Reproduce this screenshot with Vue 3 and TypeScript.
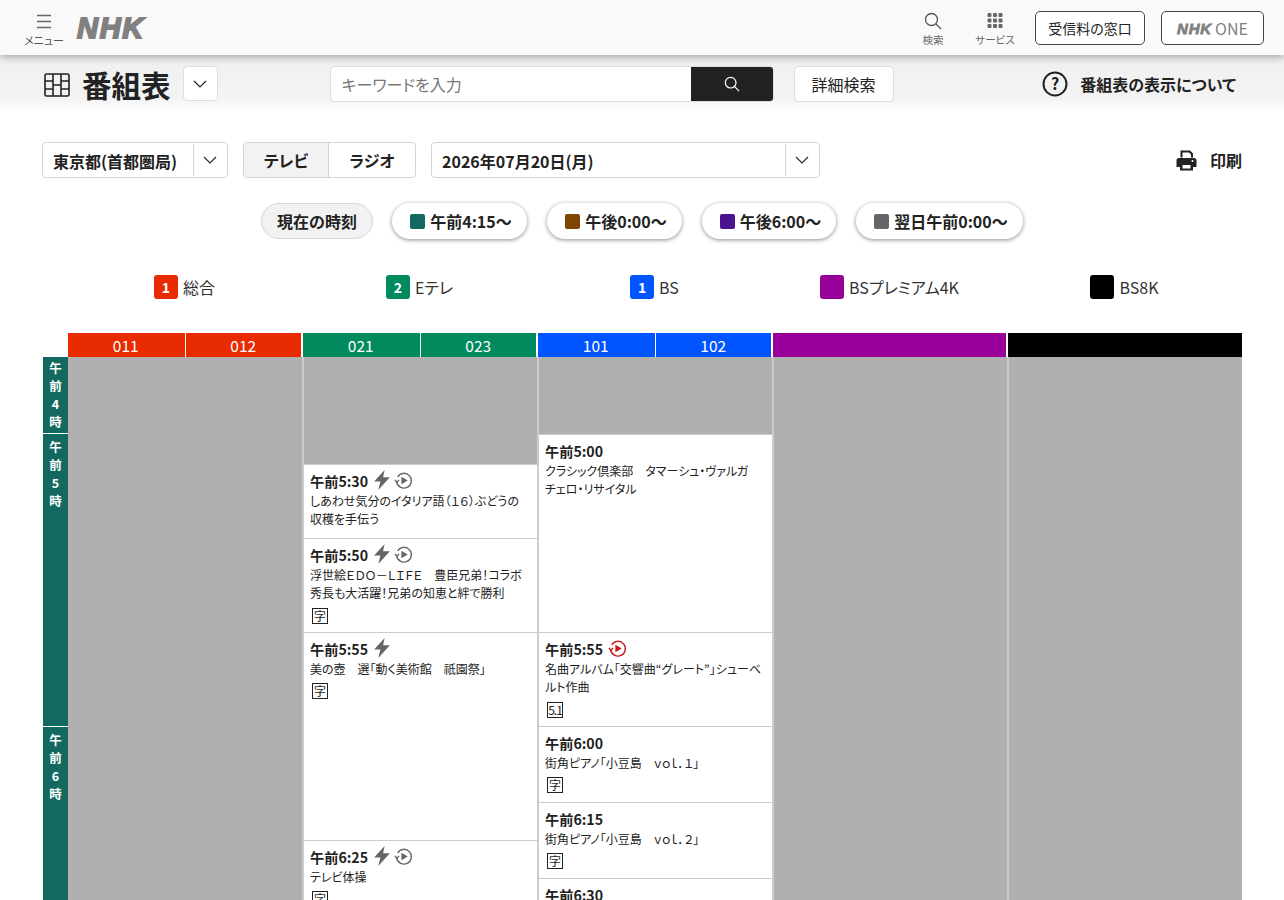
<script setup lang="ts">
interface Program {
  time?: string
  title?: string
  height: number
  bolt?: boolean
  replay?: 'gray' | 'red'
  badge?: string
}

const timeSlots = [
  { label: ['午', '前', '4', '時'], height: 77 },
  { label: ['午', '前', '5', '時'], height: 293 },
  { label: ['午', '前', '6', '時'], height: 300 },
]

const chips = [
  { label: '午前4:15〜', color: '#136860', width: 135 },
  { label: '午後0:00〜', color: '#7f4500', width: 135 },
  { label: '午後6:00〜', color: '#4b1390', width: 134 },
  { label: '翌日午前0:00〜', color: '#666666', width: 167 },
]

const legend = [
  { num: '1', name: '総合', color: '#e82b00' },
  { num: '2', name: 'Eテレ', color: '#008a5e' },
  { num: '1', name: 'BS', color: '#0055ff' },
  { num: '', name: 'BSプレミアム4K', color: '#990099' },
  { num: '', name: 'BS8K', color: '#000000' },
]

const columns: { color: string; heads: string[]; programs: Program[] }[] = [
  { color: '#e82b00', heads: ['011', '012'], programs: [] },
  {
    color: '#008a5e',
    heads: ['021', '023'],
    programs: [
      { height: 107 },
      { time: '午前5:30', title: 'しあわせ気分のイタリア語（１６）ぶどうの収穫を手伝う', height: 74, bolt: true, replay: 'gray' },
      { time: '午前5:50', title: '浮世絵ＥＤＯ－ＬＩＦＥ　豊臣兄弟！コラボ秀長も大活躍！兄弟の知恵と絆で勝利', height: 94, bolt: true, replay: 'gray', badge: '字' },
      { time: '午前5:55', title: '美の壺　選「動く美術館　祇園祭」', height: 208, bolt: true, badge: '字' },
      { time: '午前6:25', title: 'テレビ体操', height: 120, bolt: true, replay: 'gray', badge: '字' },
    ],
  },
  {
    color: '#0055ff',
    heads: ['101', '102'],
    programs: [
      { height: 77 },
      { time: '午前5:00', title: 'クラシック倶楽部　タマーシュ・ヴァルガ\nチェロ・リサイタル', height: 198 },
      { time: '午前5:55', title: '名曲アルバム「交響曲“グレート”」シューベルト作曲', height: 94, replay: 'red', badge: '5.1' },
      { time: '午前6:00', title: '街角ピアノ「小豆島　ｖｏｌ．１」', height: 76, badge: '字' },
      { time: '午前6:15', title: '街角ピアノ「小豆島　ｖｏｌ．２」', height: 76, badge: '字' },
      { time: '午前6:30', title: '', height: 100 },
    ],
  },
  { color: '#990099', heads: [], programs: [] },
  { color: '#000000', heads: [], programs: [] },
]
</script>

<template>
  <div class="page">
    <header class="site-header">
      <div class="menu">
        <svg width="16" height="15" viewBox="0 0 16 15" fill="none" stroke="#666" stroke-width="1.3">
          <path d="M1 1.5h14M1 7.5h14M1 13.5h14" />
        </svg>
        <span>メニュー</span>
      </div>
      <span class="logo">NHK</span>
      <div class="header-right">
        <div class="head-tool search-tool">
          <svg width="18" height="18" viewBox="0 0 18 18" fill="none" stroke="#555" stroke-width="1.3">
            <circle cx="7.5" cy="7.5" r="6" />
            <path d="M12 12l5 5" />
          </svg>
          <span>検索</span>
        </div>
        <div class="head-tool service-tool">
          <svg width="16" height="18" viewBox="0 0 16 18" fill="#666">
            <rect x="0.5" y="1" width="4" height="4" rx="1" /><rect x="6" y="1" width="4" height="4" rx="1" /><rect x="11.5" y="1" width="4" height="4" rx="1" />
            <rect x="0.5" y="6.500" width="4" height="4" rx="1" /><rect x="6" y="6.500" width="4" height="4" rx="1" /><rect x="11.5" y="6.500" width="4" height="4" rx="1" />
            <rect x="0.5" y="12" width="4" height="4" rx="1" /><rect x="6" y="12" width="4" height="4" rx="1" /><rect x="11.5" y="12" width="4" height="4" rx="1" />
          </svg>
          <span>サービス</span>
        </div>
        <a class="head-btn fee">受信料の窓口</a>
        <a class="head-btn one"><b>NHK</b>ONE</a>
      </div>
    </header>

    <section class="sub-header">
      <svg class="title-icon" width="26" height="24" viewBox="0 0 26 24" fill="none" stroke="#222" stroke-width="1.6">
        <rect x="1" y="1" width="24" height="22" rx="1.5" />
        <path d="M9 1v22M17 1v22M1 8h8M1 16h8M9 12h8M17 8h8M17 16h8" />
      </svg>
      <h1>番組表</h1>
      <button class="icon-box title-drop">
        <svg width="14" height="8" viewBox="0 0 14 8" fill="none" stroke="#222" stroke-width="1.2"><path d="M1 1l6 6 6-6" /></svg>
      </button>
      <div class="search-box">
        <span class="placeholder">キーワードを入力</span>
        <span class="search-submit">
          <svg width="16" height="16" viewBox="0 0 18 18" fill="none" stroke="#fff" stroke-width="1.4">
            <circle cx="7.5" cy="7.5" r="6" />
            <path d="M12 12l5 5" />
          </svg>
        </span>
      </div>
      <button class="detail-btn">詳細検索</button>
      <div class="about">
        <svg width="26" height="26" viewBox="0 0 26 26" fill="none">
          <circle cx="13" cy="13" r="11.5" stroke="#222" stroke-width="2" />
          <text x="13" y="18.5" text-anchor="middle" class="q-mark">?</text>
        </svg>
        <span>番組表の表示について</span>
      </div>
    </section>

    <section class="controls">
      <div class="select area">
        <span class="select-text">東京都(首都圏局)</span>
        <span class="select-arrow">
          <svg width="14" height="8" viewBox="0 0 14 8" fill="none" stroke="#222" stroke-width="1.1"><path d="M1 1l6 6 6-6" /></svg>
        </span>
      </div>
      <div class="tabs">
        <span class="tab active">テレビ</span>
        <span class="tab">ラジオ</span>
      </div>
      <div class="select date">
        <span class="select-text">2026年07月20日(月)</span>
        <span class="select-arrow">
          <svg width="14" height="8" viewBox="0 0 14 8" fill="none" stroke="#222" stroke-width="1.1"><path d="M1 1l6 6 6-6" /></svg>
        </span>
      </div>
      <div class="print">
        <svg width="21" height="21" viewBox="0 0 21 21" fill="#222">
          <path d="M4.500 .5h9.500l3 3v4h-2V4.500L13 2.500H6.500v5h-2z" />
          <path d="M3 8h15a2.500 2.500 0 0 1 2.500 2.500v6.500H17v3.500H4V17H.5v-6.500A2.500 2.500 0 0 1 3 8zm3.500 7v3.500h8V15zm10-5a1 1 0 1 0 0 2 1 1 0 0 0 0-2z" fill-rule="evenodd" />
        </svg>
        <span>印刷</span>
      </div>
    </section>

    <nav class="chips">
      <span class="chip now">現在の時刻</span>
      <span v-for="chip in chips" :key="chip.label" class="chip" :style="{ width: chip.width + 'px' }">
        <i :style="{ background: chip.color }"></i>{{ chip.label }}
      </span>
    </nav>

    <div class="legend">
      <div v-for="item in legend" :key="item.name" class="legend-item">
        <span class="legend-mark" :style="{ background: item.color }">{{ item.num }}</span>
        <span>{{ item.name }}</span>
      </div>
    </div>

    <div class="schedule">
      <div class="corner"></div>
      <div v-for="col in columns" :key="col.color" class="col-head" :style="{ background: col.color }">
        <span v-for="head in col.heads" :key="head">{{ head }}</span>
      </div>

      <div class="times">
        <div v-for="(slot, i) in timeSlots" :key="i" class="time-slot" :style="{ height: slot.height + 'px' }">
          <span v-for="(ch, j) in slot.label" :key="j">{{ ch }}</span>
        </div>
      </div>
      <div v-for="col in columns" :key="col.color + 'body'" class="channel">
        <template v-for="(prog, k) in col.programs" :key="k">
          <div v-if="!prog.time" :style="{ height: prog.height + 'px' }"></div>
          <article v-else class="program" :style="{ height: prog.height + 'px' }">
            <div class="prog-time">
              <strong>{{ prog.time }}</strong>
              <svg v-if="prog.bolt" width="18" height="20" viewBox="0 0 17 19" fill="#666">
                <path d="M11 0L1 11h6l-2 8 11-12H9.500z" />
              </svg>
              <svg v-if="prog.replay" width="19" height="19" viewBox="0 0 18 18" fill="none" :stroke="prog.replay === 'red' ? '#c8161d' : '#666'" stroke-width="1.300">
                <path d="M3.500 5.500A7 7 0 1 1 2.500 10" />
                <path d="M.8 8.400l1.900 2.200 2.100-2" />
                <path d="M7 5.500l6 3.500-6 3.500z" :fill="prog.replay === 'red' ? '#c8161d' : '#666'" stroke="none" />
              </svg>
            </div>
            <p class="prog-title">{{ prog.title }}</p>
            <span v-if="prog.badge" class="prog-badge" :class="{ narrow: prog.badge === '5.1' }">{{ prog.badge }}</span>
          </article>
        </template>
      </div>
    </div>
  </div>
</template>

<style scoped>
.page {
  width: 1284px;
  height: 900px;
  overflow: hidden;
  position: relative;
  background: #fff;
  color: #222;
  font-family: "Noto Sans CJK JP", "Noto Sans", sans-serif;
  font-feature-settings: "palt";
}

.site-header {
  position: relative;
  z-index: 2;
  height: 55px;
  display: flex;
  align-items: flex-start;
  padding-left: 24px;
  background: #f9f9f9;
  box-shadow: 0 2px 8px rgba(0, 0, 0, 0.32);
}

.menu {
  width: 40px;
  display: flex;
  flex-direction: column;
  align-items: center;
  padding-top: 14px;
  font-size: 11px;
  line-height: 12px;
  color: #555;
}

.menu span {
  margin-top: 5px;
  white-space: nowrap;
}

.logo {
  margin: 10px 0 0 13px;
  font-family: "Liberation Sans", sans-serif;
  font-size: 29px;
  line-height: 36px;
  font-weight: 700;
  font-style: italic;
  letter-spacing: 1.7px;
  color: #808080;
  -webkit-text-stroke: 1.8px #808080;
}

.header-right {
  margin-left: auto;
  display: flex;
  align-items: flex-start;
  padding-right: 20px;
}

.head-tool {
  display: flex;
  flex-direction: column;
  align-items: center;
  padding-top: 12px;
  font-size: 10.500px;
  line-height: 12px;
  color: #666;
}

.head-tool span {
  margin-top: 4px;
  white-space: nowrap;
}

.search-tool {
  width: 24px;
  margin-right: 30px;
}

.service-tool {
  width: 40px;
  margin-right: 20px;
}

.head-btn {
  height: 34px;
  margin-top: 11px;
  box-sizing: border-box;
  display: flex;
  align-items: center;
  justify-content: center;
  border: 1px solid #444;
  border-radius: 5px;
  background: #fff;
  font-size: 14px;
}

.fee {
  width: 110px;
  margin-right: 16px;
}

.one {
  width: 103px;
  color: #808080;
  font-size: 16px;
  gap: 3px;
}

.one b {
  font-family: "Liberation Sans", sans-serif;
  font-size: 15px;
  font-style: italic;
  font-weight: 700;
  letter-spacing: 0.8px;
  -webkit-text-stroke: 0.8px #808080;
}

.sub-header {
  height: 57px;
  display: flex;
  align-items: center;
  padding: 0 48px 0 44px;
  background: linear-gradient(#f0f0f0 0, #f3f3f3 75%, #ffffff 100%);
}

.title-icon {
  margin-top: 3px;
}

h1 {
  margin: 0 0 0 12px;
  font-size: 29.500px;
  line-height: 40px;
  font-weight: 700;
  letter-spacing: 0;
}

.icon-box {
  display: flex;
  align-items: center;
  justify-content: center;
  padding: 0;
}

.title-drop {
  width: 35px;
  height: 35px;
  margin: 0 0 0 12px;
  border: 1px solid #ddd;
  border-radius: 4px;
  background: #fff;
}

.search-box {
  width: 444px;
  height: 36px;
  margin: 0 0 0 112px;
  display: flex;
  box-sizing: border-box;
  border: 1px solid #ddd;
  border-radius: 4px;
  background: #fff;
  overflow: hidden;
}

.placeholder {
  flex: 1;
  padding-left: 11px;
  font-size: 16px;
  line-height: 34px;
  color: #777;
}

.search-submit {
  width: 82px;
  display: flex;
  align-items: center;
  justify-content: center;
  background: #222;
}

.detail-btn {
  width: 100px;
  height: 36px;
  margin: 0 0 0 20px;
  padding: 0;
  border: 1px solid #ddd;
  border-radius: 4px;
  background: #fff;
  color: #222;
  font-family: inherit;
  font-feature-settings: inherit;
  font-size: 16px;
}

.about {
  margin: 0 0 0 auto;
  display: flex;
  align-items: center;
  gap: 12px;
  font-size: 16px;
  font-weight: 700;
}

.q-mark {
  font-family: "Noto Sans CJK JP", sans-serif;
  font-size: 16px;
  font-weight: 700;
  fill: #222;
}

.controls {
  display: flex;
  align-items: center;
  height: 36px;
  margin-top: 30px;
  padding: 0 42px;
}

.select {
  height: 36px;
  box-sizing: border-box;
  display: flex;
  border: 1px solid #d5d5d5;
  border-radius: 4px;
  font-size: 16px;
  font-weight: 700;
}

.select-text {
  flex: 1;
  padding-left: 10px;
  line-height: 36px;
}

.select-arrow {
  width: 31px;
  padding-right: 2px;
  margin: 1px 0;
  display: flex;
  align-items: center;
  justify-content: center;
  border-left: 1px solid #d5d5d5;
}

.area {
  width: 186px;
}

.tabs {
  width: 173px;
  height: 36px;
  margin-left: 15px;
  box-sizing: border-box;
  display: flex;
  border: 1px solid #d5d5d5;
  border-radius: 4px;
  overflow: hidden;
  font-size: 16px;
  font-weight: 700;
}

.tab {
  flex: 1;
  text-align: center;
  line-height: 34px;
}

.tab.active {
  flex: 0 0 84px;
  background: #f2f2f2;
  border-right: 1px solid #d5d5d5;
}

.date {
  width: 389px;
  margin-left: 15px;
}

.print {
  margin-left: auto;
  display: flex;
  align-items: center;
  gap: 13px;
  font-size: 16px;
  font-weight: 700;
}

.chips {
  display: flex;
  gap: 20px;
  margin-top: 25px;
  padding-left: 261px;
}

.chip {
  height: 36px;
  box-sizing: border-box;
  display: flex;
  align-items: center;
  justify-content: center;
  gap: 5px;
  padding-left: 3px;
  border-radius: 18px;
  background: #fff;
  box-shadow: 0 1px 4px rgba(0, 0, 0, 0.45);
  font-size: 16px;
  font-weight: 700;
}

.chip i {
  width: 15px;
  height: 15px;
  border-radius: 2px;
}

.chip.now {
  width: 112px;
  margin-right: -1px;
  padding-left: 0;
  background: #f2f2f2;
  border: 1px solid #d5d5d5;
  box-shadow: none;
}

.legend {
  display: grid;
  grid-template-columns: repeat(5, 1fr);
  margin: 36px 42px 0 67px;
  height: 24px;
}

.legend-item {
  display: flex;
  align-items: center;
  justify-content: center;
  gap: 5px;
  font-size: 16px;
  color: #333;
}

.legend-mark {
  width: 24px;
  height: 24px;
  border-radius: 3px;
  color: #fff;
  font-size: 14px;
  font-weight: 700;
  line-height: 24px;
  text-align: center;
}

.schedule {
  display: grid;
  grid-template-columns: 25px 234px repeat(4, 235px);
  grid-template-rows: 24px 1fr;
  margin: 34px 42px 0 43px;
}

.col-head {
  display: flex;
  gap: 1px;
  margin: 0 1px;
  color: #fff;
  font-size: 15.500px;
  line-height: 25px;
  text-align: center;
}

.col-head:nth-child(2) {
  margin-left: 0;
}

.col-head:nth-child(6) {
  margin-right: 0;
}

.col-head span {
  flex: 1;
}

.col-head span + span {
  border-left: 1px solid #fff;
}

.time-slot {
  box-sizing: border-box;
  display: flex;
  flex-direction: column;
  align-items: center;
  padding-top: 4px;
  border-bottom: 1px solid #fff;
  background: #136860;
  color: #fff;
  font-size: 12.500px;
  font-weight: 700;
  line-height: 18px;
}

.time-slot:first-child {
  padding-top: 2px;
}

.channel {
  height: 700px;
  box-sizing: border-box;
  background: #b0b0b0;
  border-left: 2px solid #ccc;
}

.channel:nth-child(8) {
  border-left: none;
}

.program {
  box-sizing: border-box;
  padding: 5px 9px 0 6px;
  background: #fff;
  border-top: 1px solid #ccc;
  overflow: hidden;
}

.prog-time {
  display: flex;
  align-items: center;
  gap: 5px;
  height: 22px;
}

.prog-time strong {
  font-size: 14.200px;
  font-weight: 700;
  line-height: 21px;
}

.prog-time svg {
  margin-top: -2px;
}

.prog-time svg + svg {
  margin-left: -2px;
}

.prog-title {
  margin: 0;
  font-size: 12px;
  line-height: 18.400px;
  color: #222;
  white-space: pre-line;
}

.prog-badge {
  display: block;
  width: 16px;
  height: 16px;
  margin: 5px 0 0 2px;
  box-sizing: border-box;
  border: 1px solid #222;
  font-size: 12px;
  line-height: 13px;
  text-align: center;
  font-feature-settings: normal;
}

.prog-badge.narrow {
  letter-spacing: -1px;
}
</style>

<style>
html,
body {
  margin: 0;
  overflow: hidden;
}
</style>
